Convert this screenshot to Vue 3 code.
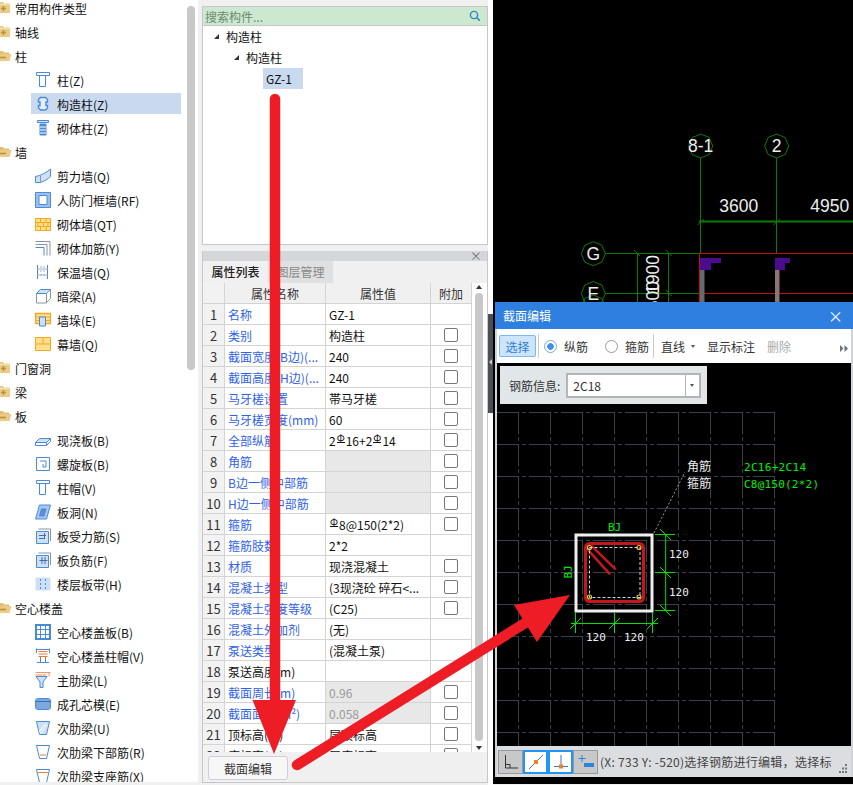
<template>
  <div class="page">
    <!-- 构件类型树 -->
    <aside class="type-tree">
      <div
        v-for="row in typeRows"
        :key="row.label"
        class="type-row"
        :class="{ child: row.icon, selected: row.selected }"
      >
        <svg v-if="!row.icon" class="folder" width="12" height="14" viewBox="0 0 12 14">
          <template v-if="row.open">
            <path d="M-2 3h5l1 1.500h5v2h-11z" fill="#e2bd74" />
            <path d="M-2 6h13.500l-2 7h-11.500z" fill="#eccb86" />
            <path d="M-1 9.500h7" stroke="#b98f3c" stroke-width="1.500" fill="none" />
          </template>
          <template v-else>
            <path d="M-2 2h5l1 1.500h6v9.500h-12z" fill="#eccb86" />
            <path d="M-2 4.500h12" stroke="#f6e3b8" fill="none" />
            <path d="M1 8.500h5M3.500 6v5" stroke="#b98f3c" stroke-width="1.500" fill="none" />
          </template>
        </svg>
        <svg v-else class="type-icon" width="16" height="16" viewBox="0 0 16 16">
          <path
            v-for="(p, i) in icons[row.icon]"
            :key="i"
            :d="p.d"
            :fill="p.f || 'none'"
            :stroke="p.s || '#4a8ad8'"
            :stroke-width="p.w || 1"
          />
        </svg>
        <span>{{ row.label }}</span>
      </div>
      <div class="tree-thumb"></div>
    </aside>

    <!-- 中间：构件列表 + 属性列表 -->
    <section class="middle">
      <div class="comp-panel">
        <div class="search">
          <span>搜索构件...</span>
          <svg width="12" height="12" viewBox="0 0 12 12">
            <circle cx="5" cy="5" r="3.600" fill="none" stroke="#2a8ac0" stroke-width="1.400" />
            <path d="M7.800 7.800l3 3" stroke="#2a8ac0" stroke-width="1.600" />
          </svg>
        </div>
        <div class="comp-row lv0"><i class="tri"></i>构造柱</div>
        <div class="comp-row lv1"><i class="tri"></i>构造柱</div>
        <div class="comp-row lv2"><span class="comp-sel">GZ-1</span></div>
      </div>

      <div class="prop-panel">
        <div class="prop-title">×</div>
        <div class="tabs">
          <div class="tab active">属性列表</div>
          <div class="tab">图层管理</div>
        </div>
        <div class="prop-body">
          <div class="prop-table">
            <div class="prop-row head">
              <div class="cell num"></div>
              <div class="cell center">属性名称</div>
              <div class="cell center">属性值</div>
              <div class="cell center">附加</div>
            </div>
            <div v-for="(p, i) in props" :key="i" class="prop-row">
              <div class="cell num">{{ i + 1 }}</div>
              <div class="cell name" :class="{ plain: p.plain }">{{ p.name }}</div>
              <div class="cell" :class="{ off: p.off, dim: p.dim }">
                <template v-if="p.parts">
                  <template v-for="(t, j) in p.parts" :key="j">
                    <span v-if="t === '#'" class="rebar">Φ</span>
                    <template v-else>{{ t }}</template>
                  </template>
                </template>
                <template v-else>{{ p.value }}</template>
              </div>
              <div class="cell center"><i v-if="p.check" class="check"></i></div>
            </div>
          </div>
          <div class="prop-scroll">
            <i class="up"></i>
            <div class="prop-thumb"></div>
            <i class="down"></i>
          </div>
        </div>
        <div class="prop-foot">
          <button class="edit-btn">截面编辑</button>
        </div>
      </div>
    </section>

    <div class="gutter"><div class="handle"><i></i></div></div>

    <!-- CAD 绘图区 -->
    <main class="cad">
      <svg class="cad-svg" width="360" height="785" viewBox="493 0 360 785">
        <g fill="none" stroke="#0a7a0a" stroke-width="1">
          <path d="M700.500 158V254M776.500 158V254M605 253.500H700M605 293.500H700M637.500 253V302M668.500 253V302" />
          <path d="M699 221.500H853" stroke-width="2" />
          <path d="M697.700 225l6-6M773.700 225l6-6M634 250l6 6M665.700 250l6 6M665.700 290l6 6" />
          <path d="M700.700 134l8.500 3.500 3.500 8.500-3.500 8.500-8.500 3.500-8.500-3.500-3.500-8.500 3.500-8.500z" />
          <path d="M776.700 134l8.500 3.500 3.500 8.500-3.500 8.500-8.500 3.500-8.500-3.500-3.500-8.500 3.500-8.500z" />
          <path d="M593.300 241.700l8.500 3.500 3.500 8.500-3.500 8.500-8.500 3.500-8.500-3.500-3.500-8.500 3.500-8.500z" />
          <path d="M593.300 281.500l8.500 3.500 3.500 8.500-3.500 8.500-8.500 3.500-8.500-3.500-3.500-8.500 3.500-8.500z" />
          <path d="M593.300 295l8.500 3.500 3.500 8.500-3.500 8.500-8.500 3.500-8.500-3.500-3.500-8.500 3.500-8.500z" />
        </g>
        <path d="M700 253.500H853M700 293.500H853M699.500 253.500V302" fill="none" stroke="#c80d0d" />
        <path d="M700 258h21v5h-10v7h-11zM775 258h15v5h-5v7h-10z" fill="#4b0b8f" />
        <path d="M700 270h4.500v32h-4.500z" fill="#666a70" />
        <path d="M775 270h4.500v32h-4.500z" fill="#8a7478" />
        <g class="cad-text">
          <text x="700.700" y="152" text-anchor="middle">8-1</text>
          <text x="776.700" y="152" text-anchor="middle">2</text>
          <text x="738.700" y="212" text-anchor="middle">3600</text>
          <text x="829.700" y="212" text-anchor="middle">4950</text>
          <text x="593.300" y="260" text-anchor="middle">G</text>
          <text x="593.300" y="299.500" text-anchor="middle">E</text>
          <text transform="translate(659 255) rotate(-90)" text-anchor="end">1900</text>
          <text transform="translate(659 281) rotate(-90)" text-anchor="end">1500</text>
        </g>
      </svg>

      <div class="dialog">
        <div class="dlg-title">
          <span>截面编辑</span>
          <span class="dlg-close">×</span>
        </div>
        <div class="dlg-tools">
          <button class="tool-select">选择</button>
          <i class="tool-sep"></i>
          <label class="radio on"><i></i>纵筋</label>
          <label class="radio"><i></i>箍筋</label>
          <i class="tool-sep"></i>
          <span class="tool line-tool">直线<b></b></span>
          <span class="tool">显示标注</span>
          <span class="tool disabled">删除</span>
          <span class="tool-more">
            <svg width="8" height="7" viewBox="0 0 8 7"><path d="M0 0l3.500 3.500L0 7zM4.500 0L8 3.500 4.500 7z" fill="#6b7280" /></svg>
          </span>
        </div>
        <div class="dlg-canvas">
          <svg class="section" width="354" height="383" viewBox="497 363 354 383">
            <g fill="none" stroke="#3a3f4d" stroke-dasharray="22 3 4 3">
              <path v-for="y in gridY" :key="'h' + y" :d="`M497 ${y}.500H775`" />
              <path v-for="x in gridX" :key="'v' + x" :d="`M${x}.500 412V746`" />
            </g>
            <path d="M654 533L685 472" fill="none" stroke="#9a9a9a" stroke-dasharray="2 2" />
            <rect x="576" y="535" width="76" height="76" fill="none" stroke="#efefef" stroke-width="3" />
            <rect x="585.500" y="543.500" width="58" height="58" rx="4" fill="none" stroke="#c5161d" stroke-width="3" />
            <path d="M586.700 548.300L610 574.300M591.700 546L615.700 569.300" stroke="#c5161d" stroke-width="2.500" fill="none" />
            <rect x="589.500" y="547.500" width="50.500" height="50" fill="none" stroke="#c8d8f0" stroke-dasharray="3 2" />
            <g fill="none" stroke="#e8d040" stroke-width="1.200">
              <circle cx="589.500" cy="547.500" r="2" />
              <circle cx="639" cy="547.500" r="2" />
              <circle cx="589.500" cy="597" r="2" />
              <circle cx="639" cy="597" r="2" />
            </g>
            <g fill="none" stroke="#00e000">
              <path d="M665.700 534V611M655 534.500H675M655 572.500H675M655 610.500H675" />
              <path d="M571 623.500H658M575.500 612V633M614.500 612V633M652.500 612V633" />
              <path d="M660 529l11 11M660 567l11 11M660 605l11 11" />
              <path d="M570 629l11-11M609 629l11-11M647 629l11-11" />
            </g>
            <g class="mono white">
              <text x="669" y="557.500">120</text>
              <text x="669" y="595.500">120</text>
              <text x="586" y="640.500">120</text>
              <text x="624" y="640.500">120</text>
            </g>
            <g class="mono green">
              <text x="608" y="531">BJ</text>
              <text transform="translate(572 578.500) rotate(-90)">BJ</text>
              <text x="744" y="471" textLength="62">2C16+2C14</text>
              <text x="744" y="487.500" textLength="75">C8@150(2*2)</text>
            </g>
            <g class="rebar-label">
              <text x="687" y="471">角筋</text>
              <text x="687" y="487.500">箍筋</text>
            </g>
          </svg>
          <div class="rebar-info">
            <span>钢筋信息:</span>
            <div class="rebar-select">
              <span>2C18</span>
              <i></i>
            </div>
          </div>
        </div>
        <div class="dlg-status">
          <span class="snap">
            <svg width="16" height="16" viewBox="0 0 16 16"><path d="M2.500 1v13H15M2.500 10.500h4.500v3.500" fill="none" stroke="#333" /></svg>
          </span>
          <span class="snap active">
            <svg width="16" height="16" viewBox="0 0 16 16">
              <path d="M1 15L15 1" stroke="#3a78c8" fill="none" />
              <rect x="6" y="6" width="4" height="4" fill="#f08020" />
            </svg>
          </span>
          <span class="snap active">
            <svg width="16" height="16" viewBox="0 0 16 16">
              <path d="M8 1v11M1 12.500h14" stroke="#3a78c8" fill="none" />
              <rect x="6" y="10.500" width="4" height="4" fill="#f08020" />
            </svg>
          </span>
          <span class="snap">
            <svg width="18" height="16" viewBox="0 0 18 16">
              <path d="M5 1v7M1.500 4.500h7" stroke="#2d83dc" fill="none" />
              <rect x="7" y="9" width="10" height="4" fill="#2d83dc" />
            </svg>
          </span>
          <span class="status-text">(X: 733 Y: -520)选择钢筋进行编辑，选择标</span>
          <svg class="grip" width="10" height="10" viewBox="0 0 10 10">
            <path d="M7 0h2v2H7zM4 3.500h2v2H4zM7 3.500h2v2H7zM1 7h2v2H1zM4 7h2v2H4zM7 7h2v2H7z" fill="#777" />
          </svg>
        </div>
      </div>
    </main>

    <!-- 标注箭头 -->
    <svg class="arrows" width="853" height="785" viewBox="0 0 853 785">
      <path d="M275 99V705" stroke="#ee1c25" stroke-width="10.500" stroke-linecap="round" fill="none" />
      <path d="M252.500 700H296L274 754z" fill="#ee1c25" />
      <path d="M297 765L530 620" stroke="#ee1c25" stroke-width="10.500" stroke-linecap="round" fill="none" />
      <path d="M570 595L514 605L537 642z" fill="#ee1c25" />
    </svg>
  </div>
</template>

<script setup>
const b = '#4a8ad8'
const lb = '#cfe0f5'
const o = '#f5a623'
const ly = '#ffe08a'
const g = '#8a94a3'

const icons = {
  zhu: [{ d: 'M1.500 .5h13v3h-13z' }, { d: 'M4.500 3.500v11h6v-11' }],
  gouzao: [{ d: 'M5.500 1.500h5l2 2v2.500h-1.500v3.500h1.500v2.500l-2 2h-5l-2-2v-2.500h1.500v-3.500h-1.500v-2.500z', f: '#e4eefa', w: 1.400 }],
  qitizhu: [{ d: 'M2.500 .5h11v2h-11z', f: lb }, { d: 'M5 4h6v11h-6z', f: b }, { d: 'M5 7h6M5 10h6M5 13h6', s: '#fff' }],
  jianli: [{ d: 'M.5 8.500C6 7.500 11 5 15.500 1v7.500c-3 3-6 4.500-10 6h-5z', f: lb }, { d: 'M5.500 8v6.500', s: g }],
  renfang: [{ d: 'M.5 .5h15v15h-15z', f: '#9cc0ea' }, { d: 'M4 3.500h8v9h-8z', f: '#fff' }],
  qitiqiang: [{ d: 'M.5 2.500h15v12h-15z', f: ly, s: o }, { d: 'M.5 6.500h15M.5 10.500h15M5.500 2.500v4M11 2.500v4M3 6.500v4M8.500 6.500v4M13 6.500v4M5.500 10.500v4M11 10.500v4', s: o }],
  jiajin: [{ d: 'M.5 1.500h14.500v14', s: g }, { d: 'M.5 4.500h11.500v11', s: g }, { d: 'M.5 7.500h8.500v8', s: b }],
  baowen: [{ d: 'M2.500 1v14M12.500 1v14' }, { d: 'M6 2v2M6 6v2M6 10v2M9 2v2M9 6v2M9 10v2M2.500 5h10M2.500 11h10', s: '#9fb4cf' }],
  anliang: [{ d: 'M1.500 5.500h10v9.500h-10z', f: '#fff', s: g }, { d: 'M1.500 5.500L5.500 1.500h10l-4 4z', f: lb }, { d: 'M11.500 5.500l4-4v9l-4 4z', f: '#fff', s: g }],
  duo: [{ d: 'M.5 1.500h15v10h-15z', f: ly, s: o, w: 1.400 }, { d: 'M.5 5h15M.5 8.500h15', s: o }, { d: 'M4.500 5h6v9h-6z', f: lb }],
  muqiang: [{ d: 'M.5 1.500h15v13h-15z', f: ly, s: o }, { d: 'M.5 8h15M8 1.500v6.500', s: o }],
  xianjiao: [{ d: 'M.5 10.500L4.500 6.500h11l-4 4z', f: lb }, { d: 'M.5 10.500h11v3h-11z', f: '#fff' }, { d: 'M11.500 13.500l4-4v-3' }],
  luoxuan: [{ d: 'M1.500 1.500h13v13h-13z' }, { d: 'M5 5h6v6h-3v-3' }],
  zhumao: [{ d: 'M1.500 .5h13v3h-13z' }, { d: 'M4.500 3.500v11h6v-11z' }],
  bandong: [{ d: 'M.5 15L4.500 1h11l-4 14z', f: '#a9c6ec' }, { d: 'M4.500 12l2-7h4.500l-2 7z', f: '#5b8fd6' }],
  shouli: [{ d: 'M1.500 3.500h12v12h-12z', f: lb }, { d: 'M3.500 1h12v12', s: g }, { d: 'M4 7.500h7M9.500 5v5M4 10.500h6', s: '#3a6fb4' }],
  fujin: [{ d: 'M1.500 3.500h12v12h-12z', f: lb }, { d: 'M3.500 1h12v12', s: g }, { d: 'M7 5v7M10 5v7M4.500 8.500h8', s: '#3a6fb4' }],
  bandai: [{ d: 'M1 2h14v12H1z', f: lb, s: lb }, { d: 'M5.500 3v2M5.500 7v2M5.500 11v2M10.500 3v2M10.500 7v2M10.500 11v2', s: b }],
  ksban: [{ d: 'M1 1h14v14H1z', f: '#fff', w: 2 }, { d: 'M1 1h14v14H1z', w: 2 }, { d: 'M5.500 1v14M10.500 1v14M1 5.500h14M1 10.500h14' }],
  kszhumao: [{ d: 'M1.500 .5v4.500M14.500 .5v4.500M1 1.500h14' }, { d: 'M3.500 3.500h9M3.500 6h9M3.500 8.500h9', s: '#f07a30' }, { d: 'M5.500 9v5.500M10.500 9v5.500M2 14.500h12' }],
  zhulei: [{ d: 'M.5 .5h15M14 .5v4M.5 3h11', s: '#f79060' }, { d: 'M1 4.500h11L8 10v5.500H5V10z', f: lb }],
  chengkong: [{ d: 'M.5 5C.5 3 2 2.500 3 2.500h10c1 0 2.500 .5 2.500 2.500v6c0 2-1.500 2.500-2.500 2.500H3c-1 0-2.500-.5-2.500-2.500z', f: '#7ea8dc' }, { d: 'M.5 5.500h15', s: '#2f6fbf' }],
  ciliang: [{ d: 'M1.500 1.500h13l-3 13h-7z', f: lb }, { d: 'M4 12l7-9M5 14l7-9', s: '#fff' }],
  xiabu: [{ d: 'M1.500 1.500h13l-3 13h-7z' }, { d: 'M5 11h6', s: '#f07a30' }],
  zhizuo: [{ d: 'M1.500 1.500h13l-3 13h-7z' }, { d: 'M3 4.500h10', s: '#f07a30' }]
}

const typeRows = [
  { label: '常用构件类型' },
  { label: '轴线' },
  { label: '柱', open: true },
  { label: '柱(Z)', icon: 'zhu' },
  { label: '构造柱(Z)', icon: 'gouzao', selected: true },
  { label: '砌体柱(Z)', icon: 'qitizhu' },
  { label: '墙', open: true },
  { label: '剪力墙(Q)', icon: 'jianli' },
  { label: '人防门框墙(RF)', icon: 'renfang' },
  { label: '砌体墙(QT)', icon: 'qitiqiang' },
  { label: '砌体加筋(Y)', icon: 'jiajin' },
  { label: '保温墙(Q)', icon: 'baowen' },
  { label: '暗梁(A)', icon: 'anliang' },
  { label: '墙垛(E)', icon: 'duo' },
  { label: '幕墙(Q)', icon: 'muqiang' },
  { label: '门窗洞' },
  { label: '梁' },
  { label: '板', open: true },
  { label: '现浇板(B)', icon: 'xianjiao' },
  { label: '螺旋板(B)', icon: 'luoxuan' },
  { label: '柱帽(V)', icon: 'zhumao' },
  { label: '板洞(N)', icon: 'bandong' },
  { label: '板受力筋(S)', icon: 'shouli' },
  { label: '板负筋(F)', icon: 'fujin' },
  { label: '楼层板带(H)', icon: 'bandai' },
  { label: '空心楼盖', open: true },
  { label: '空心楼盖板(B)', icon: 'ksban' },
  { label: '空心楼盖柱帽(V)', icon: 'kszhumao' },
  { label: '主肋梁(L)', icon: 'zhulei' },
  { label: '成孔芯模(E)', icon: 'chengkong' },
  { label: '次肋梁(U)', icon: 'ciliang' },
  { label: '次肋梁下部筋(R)', icon: 'xiabu' },
  { label: '次肋梁支座筋(X)', icon: 'zhizuo' }
]

const props = [
  { name: '名称', value: 'GZ-1' },
  { name: '类别', value: '构造柱', check: true },
  { name: '截面宽度(B边)(...', value: '240', check: true },
  { name: '截面高度(H边)(...', value: '240', check: true },
  { name: '马牙槎设置', value: '帯马牙槎', check: true },
  { name: '马牙槎宽度(mm)', value: '60', check: true },
  { name: '全部纵筋', parts: ['2', '#', '16+2', '#', '14'], check: true },
  { name: '角筋', off: true, check: true },
  { name: 'B边一侧中部筋', off: true, check: true },
  { name: 'H边一侧中部筋', off: true, check: true },
  { name: '箍筋', parts: ['#', '8@150(2*2)'], check: true },
  { name: '箍筋肢数', value: '2*2' },
  { name: '材质', value: '现浇混凝土', check: true },
  { name: '混凝土类型', value: '(3现浇砼 碎石<...', check: true },
  { name: '混凝土强度等级', value: '(C25)', check: true },
  { name: '混凝土外加剂', value: '(无)' },
  { name: '泵送类型', value: '(混凝土泵)' },
  { name: '泵送高度(m)', plain: true },
  { name: '截面周长(m)', value: '0.96', off: true, dim: true, check: true },
  { name: '截面面积(m²)', value: '0.058', off: true, dim: true, check: true },
  { name: '顶标高(m)', value: '层顶标高', plain: true, check: true },
  { name: '底标高(m)', value: '层底标高', plain: true, check: true }
]

const gridX = [518, 550, 582, 614, 646, 678, 710, 742, 774]
const gridY = [412, 444, 476, 508, 540, 572, 604, 636, 668, 700, 732]
</script>

<style scoped>
.page {
  position: relative;
  display: flex;
  width: 853px;
  height: 785px;
  overflow: hidden;
  background: #f0f0f0;
  font-family: "Noto Sans CJK SC", "Noto Sans", sans-serif;
  font-size: 12px;
  color: #111;
}

/* 构件类型树 */
.type-tree {
  position: relative;
  flex: none;
  width: 198px;
  height: 782px;
  margin-right: 4px;
  overflow: hidden;
  background: #fff;
}

.type-row {
  display: flex;
  align-items: center;
  height: 24px;
  padding-left: 15px;
  position: relative;
  white-space: nowrap;
}

.type-row:first-child {
  margin-top: -4px;
}

.folder {
  position: absolute;
  left: 0;
  top: 4px;
}

.type-row.child {
  padding-left: 35px;
}

.type-row.selected::before {
  content: "";
  position: absolute;
  left: 31px;
  width: 150px;
  top: 1px;
  height: 21px;
  background: #c8d9f0;
}

.type-icon {
  position: relative;
  flex: none;
  margin-right: 6px;
}

.type-row span {
  position: relative;
}

.tree-thumb {
  position: absolute;
  left: 187px;
  top: 6px;
  width: 8px;
  height: 364px;
  border-radius: 4px;
  background: #c8c8c8;
}

/* 中间栏 */
.middle {
  flex: none;
  display: flex;
  flex-direction: column;
  gap: 6px;
  width: 286px;
  height: 783px;
  padding-top: 6px;
  box-sizing: border-box;
}

.comp-panel {
  height: 239px;
  box-sizing: border-box;
  background: #fff;
  border: 1px solid #c5c7cc;
}

.search {
  display: flex;
  align-items: center;
  justify-content: space-between;
  height: 18px;
  padding: 0 6px 0 2px;
  background: #cce8cf;
  border-bottom: 1px solid #c5c7cc;
  color: #6d8a72;
}

.comp-row {
  display: flex;
  align-items: center;
  height: 21px;
}

.comp-row.lv0 {
  padding-left: 22px;
}

.comp-row.lv1 {
  padding-left: 42px;
}

.comp-row.lv2 {
  padding-left: 60px;
}

.tri {
  width: 0;
  height: 0;
  margin-right: 7px;
  margin-left: -11px;
  border-left: 5px solid transparent;
  border-bottom: 5px solid #333;
}

.comp-sel {
  padding: 0 4px 0 3px;
  width: 33px;
  line-height: 21px;
  background: #c8d9f0;
}

.prop-panel {
  flex: 1;
  min-height: 0;
  display: flex;
  flex-direction: column;
  border: 1px solid #c5c7cc;
  border-top: 0;
  background: #f0f0f0;
}

.prop-title {
  height: 10px;
  padding-right: 5px;
  text-align: right;
  font-size: 12px;
  line-height: 10px;
  color: #777;
  background: #d5d6da;
}

.tabs {
  display: flex;
  height: 22px;
  background: #f0f0f0;
}

.tab {
  width: 65px;
  line-height: 22px;
  text-align: center;
  color: #888;
  background: #e0e0e0;
}

.tab.active {
  color: #222;
  font-weight: 500;
  background: #f0f0f0;
}

.prop-body {
  flex: 1;
  min-height: 0;
  display: flex;
  overflow: hidden;
  background: #fff;
}

.prop-table {
  flex: none;
  width: 269px;
}

.prop-row {
  display: grid;
  grid-template-columns: 22px 101px 105px 41px;
  height: 21px;
  box-sizing: border-box;
  border-bottom: 1px solid #d4d4d4;
}

.cell {
  display: flex;
  align-items: center;
  padding-left: 3px;
  border-right: 1px solid #d4d4d4;
  white-space: nowrap;
  overflow: hidden;
}

.cell.num {
  justify-content: center;
  padding: 0;
  font-size: 13px;
  color: #333;
  background: #f2f2f2;
}

.cell.name {
  color: #2f62e8;
}

.cell.name.plain {
  color: #111;
}

.cell.center {
  justify-content: center;
  padding: 0;
}

.cell.off {
  background: #e8e8e8;
}

.cell.dim {
  color: #999;
}

.prop-row.head {
  background: #f0f0f0;
  color: #333;
}

.rebar {
  display: inline-block;
  height: 9px;
  margin: -4px 1px 0;
  font-size: 10px;
  line-height: 9px;
  border-bottom: 1px solid #111;
}

.check {
  display: block;
  width: 12px;
  height: 12px;
  border: 1px solid #777;
  border-radius: 2px;
  background: #fff;
}

.prop-scroll {
  flex: 1;
  position: relative;
}

.prop-thumb {
  position: absolute;
  left: 3px;
  top: 10px;
  width: 8px;
  height: 448px;
  border-radius: 4px;
  background: #c8c8c8;
}

.prop-scroll .up,
.prop-scroll .down {
  position: absolute;
  left: 4px;
  border-left: 3.500px solid transparent;
  border-right: 3.500px solid transparent;
}

.prop-scroll .up {
  top: 2px;
  border-bottom: 4px solid #333;
}

.prop-scroll .down {
  top: 463px;
  border-top: 4px solid #333;
}

.prop-foot {
  flex: none;
  height: 30px;
  padding: 4px 0 0 5px;
  box-sizing: border-box;
}

.edit-btn {
  display: block;
  width: 80px;
  height: 24px;
  padding: 0;
  font: inherit;
  color: #333;
  background: #f7f7f7;
  border: 1px solid #ccd0d6;
  border-radius: 3px;
}

.gutter {
  flex: none;
  width: 5px;
  height: 785px;
  background: #fff;
}

.handle {
  position: relative;
  margin-top: 314px;
  height: 99px;
  background: #4a4f55;
}

.handle i {
  position: absolute;
  top: 45px;
  left: 1px;
  border-top: 3px solid transparent;
  border-bottom: 3px solid transparent;
  border-right: 3px solid #c8c8c8;
}

/* CAD */
.cad {
  position: relative;
  flex: none;
  width: 360px;
  height: 784px;
  background: #000;
}

.cad-svg {
  display: block;
}

.cad-text text {
  font-family: "Liberation Sans", sans-serif;
  font-size: 17.500px;
  fill: #eee;
}

/* 弹窗 */
.dialog {
  position: absolute;
  left: 2px;
  top: 302px;
  width: 358px;
  height: 475px;
  box-sizing: border-box;
  display: flex;
  flex-direction: column;
  padding: 0 2px;
  background: #d0d4da;
}

.dlg-title {
  flex: none;
  display: flex;
  align-items: center;
  justify-content: space-between;
  height: 27px;
  margin: 0 -2px;
  padding: 0 10px 0 8px;
  color: #fff;
  background: #2e7fe0;
}

.dlg-close {
  font-size: 15px;
  line-height: 1;
}

.dlg-tools {
  flex: none;
  display: flex;
  align-items: center;
  position: relative;
  height: 34px;
  padding-left: 2px;
  background: #fff;
  color: #333;
}

.tool-select {
  width: 37px;
  height: 22px;
  padding: 0;
  font: inherit;
  color: #2b7de0;
  background: #cde4fb;
  border: 1px solid #7ab8f5;
  border-radius: 2px;
}

.tool-sep {
  flex: none;
  width: 1px;
  height: 24px;
  margin: 0 2px;
  background: #ccc;
}

.radio {
  flex: none;
  display: flex;
  align-items: center;
  width: 61px;
}

.radio.on {
  margin-left: 3px;
}

.radio:not(.on) {
  width: 46px;
}

.radio i {
  flex: none;
  box-sizing: border-box;
  width: 13px;
  height: 13px;
  margin-right: 7px;
  border: 1px solid #999;
  border-radius: 50%;
}

.radio.on i {
  background: radial-gradient(circle, #3c90f0 0 3px, #fff 3.500px);
  border-color: #7aa7d8;
}

.tool {
  margin-left: 12px;
}

.line-tool {
  display: flex;
  align-items: center;
  margin-left: 5px;
  width: 34px;
}

.line-tool b {
  margin-left: 6px;
  border-left: 2.500px solid transparent;
  border-right: 2.500px solid transparent;
  border-top: 3px solid #555;
}

.tool.disabled {
  color: #aaa;
}

.tool-more {
  position: absolute;
  right: 3px;
  top: 9px;
}

.dlg-canvas {
  flex: 1;
  min-height: 0;
  position: relative;
  background: #000;
}

.section {
  display: block;
}

.mono text {
  font-family: "DejaVu Sans Mono", monospace;
  font-size: 11px;
}

.mono.white text {
  fill: #eee;
}

.mono.green text {
  fill: #00f000;
}

.rebar-label text {
  font-size: 12px;
  fill: #eee;
}

.rebar-info {
  position: absolute;
  left: 3px;
  top: 3px;
  display: flex;
  align-items: center;
  gap: 6px;
  width: 207px;
  height: 38px;
  box-sizing: border-box;
  padding-left: 9px;
  color: #333;
  background: #e1e6e8;
}

.rebar-select {
  position: relative;
  width: 135px;
  height: 25px;
  box-sizing: border-box;
  display: flex;
  align-items: center;
  padding-left: 5px;
  background: #fff;
  border: 2px solid #b5b5b5;
}

.rebar-select i {
  position: absolute;
  right: 0;
  top: 0;
  bottom: 0;
  width: 13px;
  border-left: 1px solid #b5b5b5;
}

.rebar-select i::after {
  content: "";
  position: absolute;
  left: 4px;
  top: 9px;
  border-left: 2.500px solid transparent;
  border-right: 2.500px solid transparent;
  border-top: 3px solid #555;
}

.dlg-status {
  flex: none;
  display: flex;
  align-items: center;
  position: relative;
  height: 31px;
  padding-left: 1px;
  color: #444;
  background: #dcdde0;
}

.snap {
  flex: none;
  display: flex;
  align-items: center;
  justify-content: center;
  width: 25px;
  height: 24px;
  box-sizing: border-box;
  background: #c8c8c8;
  border: 1px solid #999;
}

.snap.active {
  background: #fff;
  border: 2px solid #2196f3;
}

.status-text {
  margin-left: 2px;
  letter-spacing: 0.280px;
  white-space: nowrap;
}

.grip {
  position: absolute;
  right: 3px;
  bottom: 3px;
}

.arrows {
  position: absolute;
  left: 0;
  top: 0;
  pointer-events: none;
}
</style>
